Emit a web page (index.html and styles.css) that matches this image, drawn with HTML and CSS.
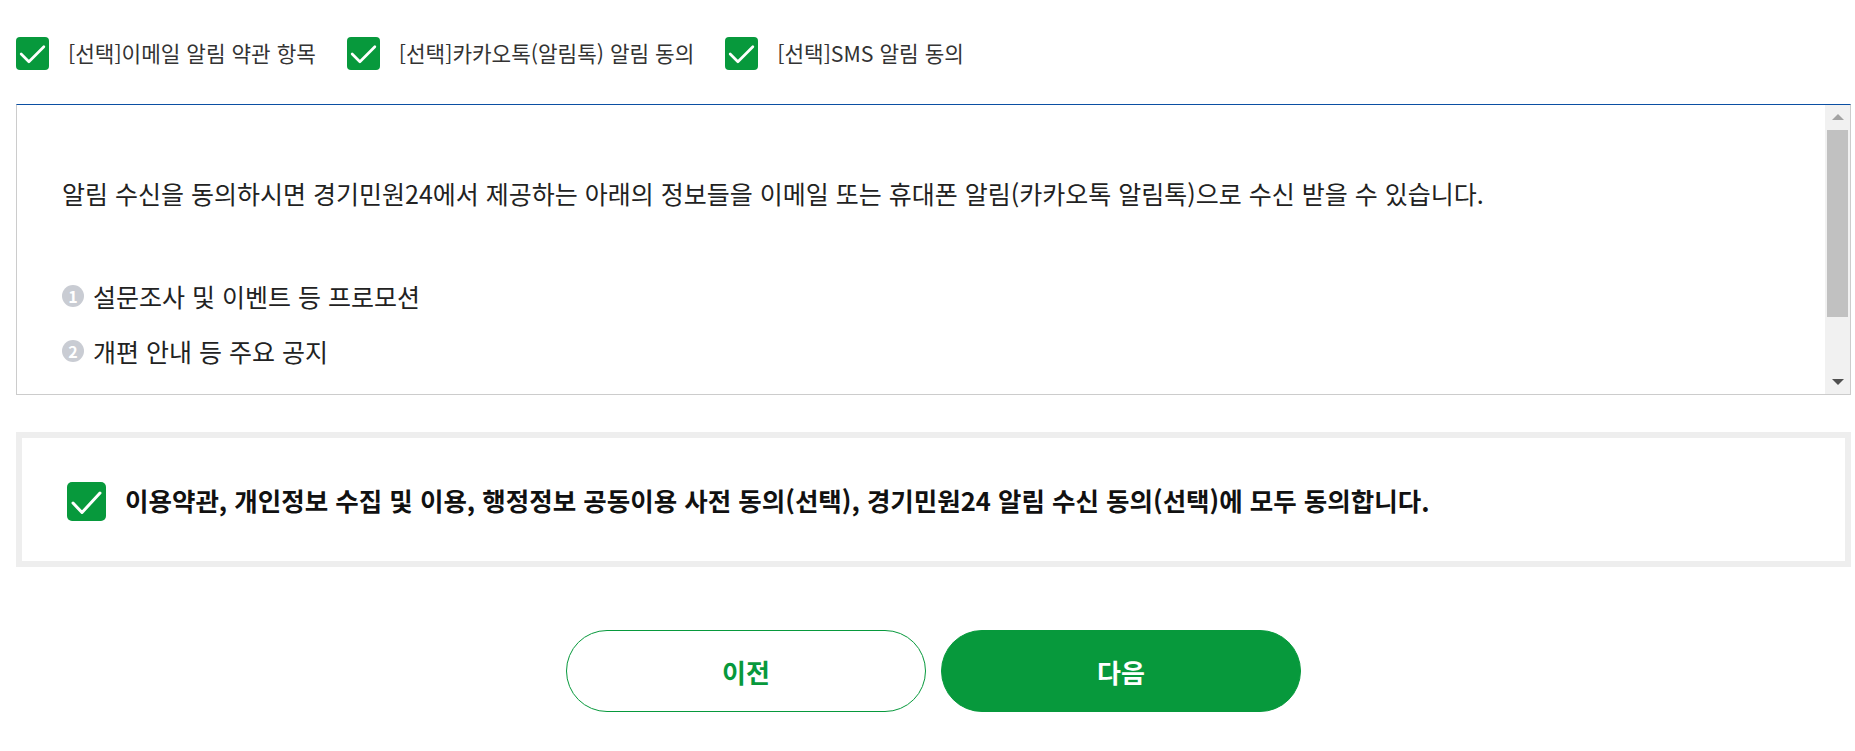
FILE: index.html
```html
<!DOCTYPE html>
<html lang="ko">
<head>
<meta charset="utf-8">
<title>알림 수신 동의</title>
<link rel="stylesheet" href="styles.css">
</head>
<body>
<div class="page">
  <div class="opt-row">
    <label class="opt">
      <span class="chk"><svg viewBox="0 0 32 32"><path d="M5 16.5 L12.5 24 L27 9.5" /></svg></span>
      <span class="opt-text">[선택]이메일 알림 약관 항목</span>
    </label>
    <label class="opt">
      <span class="chk"><svg viewBox="0 0 32 32"><path d="M5 16.5 L12.5 24 L27 9.5" /></svg></span>
      <span class="opt-text">[선택]카카오톡(알림톡) 알림 동의</span>
    </label>
    <label class="opt">
      <span class="chk"><svg viewBox="0 0 32 32"><path d="M5 16.5 L12.5 24 L27 9.5" /></svg></span>
      <span class="opt-text">[선택]SMS 알림 동의</span>
    </label>
  </div>

  <div class="terms">
    <div class="terms-body">
      <p class="lead">알림 수신을 동의하시면 경기민원24에서 제공하는 아래의 정보들을 이메일 또는 휴대폰 알림(카카오톡 알림톡)으로 수신 받을 수 있습니다.</p>
      <ol class="items">
        <li><span class="num">1</span>설문조사 및 이벤트 등 프로모션</li>
        <li><span class="num">2</span>개편 안내 등 주요 공지</li>
      </ol>
    </div>
    <div class="vscroll">
      <span class="arrow up"></span>
      <div class="track"><div class="thumb"></div></div>
      <span class="arrow down"></span>
    </div>
  </div>

  <div class="all-agree">
    <label class="opt big">
      <span class="chk big"><svg viewBox="0 0 39 39"><path d="M6 21 L15 30.5 L33 11" /></svg></span>
      <span class="all-text">이용약관, 개인정보 수집 및 이용, 행정정보 공동이용 사전 동의(선택), 경기민원24 알림 수신 동의(선택)에 모두 동의합니다.</span>
    </label>
  </div>

  <div class="btns">
    <button class="btn prev">이전</button>
    <button class="btn next">다음</button>
  </div>
</div>
</body>
</html>
```

FILE: styles.css
```css
html, body {
  margin: 0;
  padding: 0;
  background: #fff;
}
body {
  font-family: "Noto Sans CJK KR", "Noto Sans", sans-serif;
  color: #222;
}
.page {
  width: 1835px;
  margin-left: 16px;
  padding-top: 37px;
}
.opt-row {
  display: flex;
  align-items: center;
  height: 32px;
}
.opt {
  display: flex;
  align-items: center;
  margin-right: 31px;
}
.chk {
  width: 33px;
  height: 33px;
  border-radius: 4px;
  background: #07993c;
  display: flex;
  flex: none;
}
.chk svg {
  width: 100%;
  height: 100%;
}
.chk path {
  fill: none;
  stroke: #fff;
  stroke-width: 2.6;
  stroke-linecap: round;
  stroke-linejoin: round;
}
.opt-text {
  margin-left: 19px;
  font-size: 21.3px;
  line-height: 32px;
  color: #333;
}

/* terms box with scrollbar */
.terms {
  margin-top: 35px;
  height: 291px;
  border: 1px solid #cccccc;
  border-top-color: #0b4fa3;
  box-sizing: border-box;
  display: flex;
}
.terms-body {
  flex: 1;
  overflow: hidden;
  padding: 70px 40px 0 45px;
}
.vscroll {
  width: 25px;
  flex: none;
  background: #f1f1f1;
  display: flex;
  flex-direction: column;
}
.arrow {
  height: 24px;
  flex: none;
  display: flex;
  align-items: center;
  justify-content: center;
}
.arrow::before {
  content: "";
  width: 0;
  height: 0;
  border-left: 6px solid transparent;
  border-right: 6px solid transparent;
}
.arrow.up::before {
  border-bottom: 6px solid #a3a3a3;
}
.arrow.down::before {
  border-top: 6px solid #505050;
}
.track {
  flex: 1;
  padding: 1px 2px 0;
}
.thumb {
  height: 187px;
  background: #c1c1c1;
}

.lead {
  margin: 0;
  font-size: 25px;
  line-height: 36px;
  color: #222;
}
.items {
  list-style: none;
  margin: 65px 0 0;
  padding: 0;
}
.items li {
  display: flex;
  align-items: center;
  font-size: 25px;
  line-height: 40px;
  color: #222;
  margin-bottom: 15px;
}
.num {
  width: 22px;
  height: 22px;
  border-radius: 50%;
  background: #c9ccd3;
  color: #fff;
  font-size: 16px;
  font-weight: bold;
  line-height: 22px;
  text-align: center;
  margin-right: 9px;
  flex: none;
}

.all-agree {
  margin-top: 37px;
  height: 135px;
  border: 6px solid #eeeeee;
  box-sizing: border-box;
  padding-left: 45px;
  display: flex;
  align-items: center;
}
.opt.big {
  margin-right: 0;
}
.chk.big {
  width: 39px;
  height: 39px;
  border-radius: 5px;
  margin-top: 4px;
}
.chk.big path {
  stroke-width: 3;
}
.all-text {
  margin-left: 19px;
  font-size: 25.5px;
  font-weight: bold;
  color: #111;
}

.btns {
  margin-top: 63px;
  display: flex;
  justify-content: center;
  gap: 15px;
}
.btn {
  width: 360px;
  height: 82px;
  border-radius: 41px;
  font-family: "Noto Sans CJK KR", "Noto Sans", sans-serif;
  font-size: 26px;
  font-weight: bold;
  cursor: pointer;
  box-sizing: border-box;
}
.btn.prev {
  background: #fff;
  border: 1px solid #07993c;
  color: #07993c;
}
.btn.next {
  background: #07993c;
  border: 1px solid #07993c;
  color: #fff;
}
```
